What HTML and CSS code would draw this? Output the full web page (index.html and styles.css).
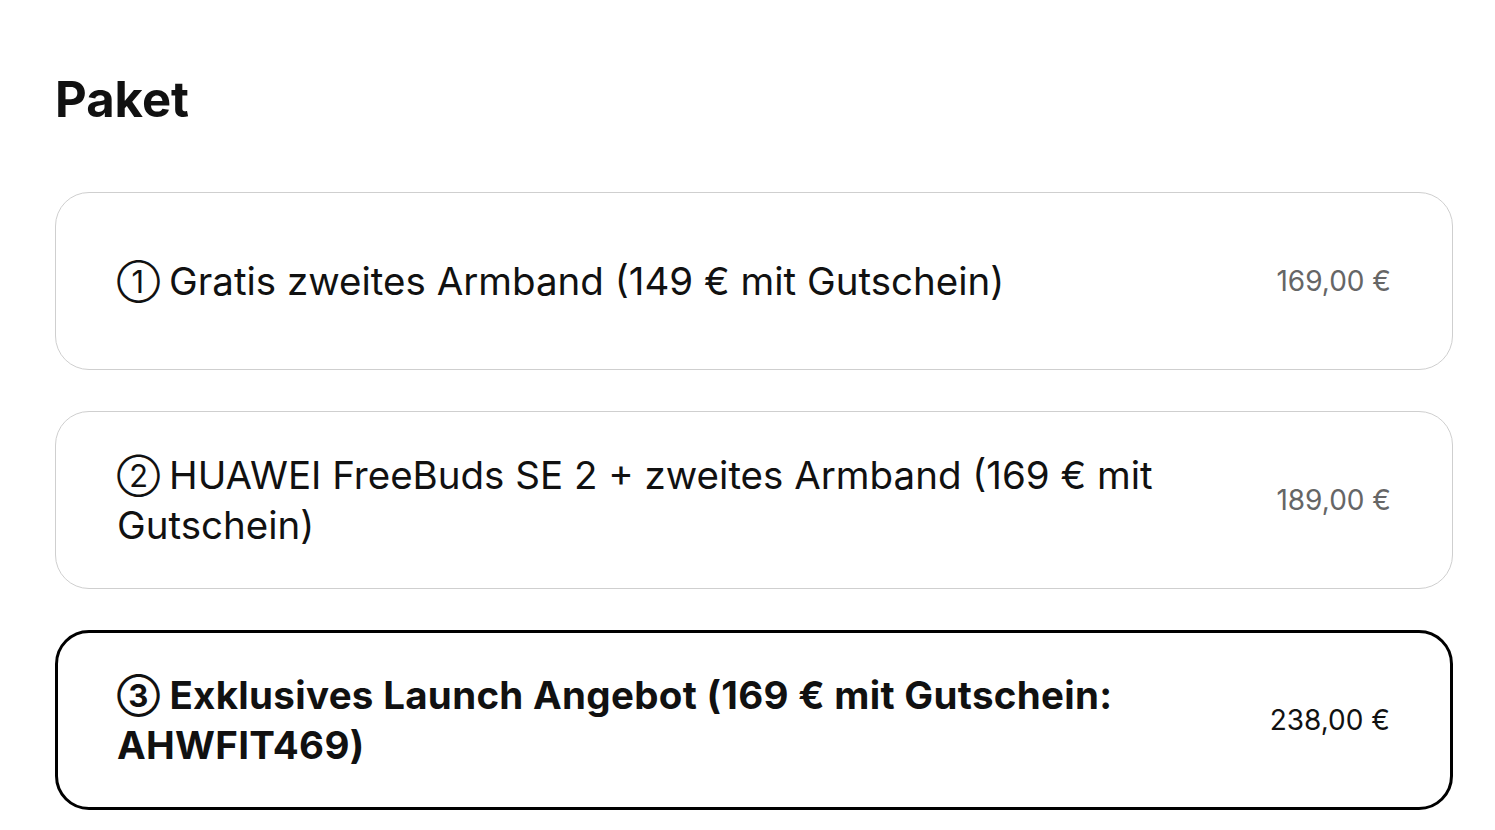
FILE: index.html
```html
<!DOCTYPE html>
<html lang="de">
<head>
    <meta charset="UTF-8">
    <meta name="viewport" content="width=device-width, initial-scale=1.0">
    <title>Paket</title>
    <link rel="stylesheet" href="styles.css">
</head>
<body>
    <section class="package">
        <h2 class="package-title">Paket</h2>

        <div class="option-list">
            <div class="option">
                <div class="option-name"><span class="num">①</span>Gratis zweites Armband (149 € mit Gutschein)</div>
                <div class="option-price">169,00 €</div>
            </div>
            <div class="option">
                <div class="option-name"><span class="num">②</span>HUAWEI FreeBuds SE 2 + zweites Armband (169 € mit Gutschein)</div>
                <div class="option-price">189,00 €</div>
            </div>
            <div class="option selected">
                <div class="option-name"><span class="num">③</span>Exklusives Launch Angebot (169 € mit Gutschein: AHWFIT469)</div>
                <div class="option-price">238,00 €</div>
            </div>
        </div>
    </section>
</body>
</html>
```

FILE: styles.css
```css
body {
    margin: 0;
    background: #fff;
    color: #111;
    font-family: Inter, "Open Sans", sans-serif;
}
.package {
    padding: 70px 42px 20px 55px;
}
.package-title {
    margin: 0 0 62px 0;
    font-size: 49px;
    font-weight: 700;
    line-height: 60px;
}
.option-list {
    display: flex;
    flex-direction: column;
    gap: 41px;
}
.option {
    display: flex;
    align-items: center;
    justify-content: space-between;
    gap: 40px;
    min-height: 100px;
    padding: 38px 61px;
    border: 1px solid #cfcfcf;
    border-radius: 34px;
}
.option-name {
    max-width: 1090px;
    font-size: 38.5px;
    line-height: 50px;
}
/* circled number in front of each package */
.num {
    margin-right: 9px;
    font-size: 31px;
    line-height: 1;
    vertical-align: 2px;
}
.option-price {
    flex-shrink: 0;
    font-size: 28px;
    color: #666;
}
.option.selected {
    border: 3px solid #000;
    padding: 37px 60px 37px 59px;
}
.option.selected .option-name {
    font-weight: 700;
    letter-spacing: 0.3px;
}
.option.selected .option-price {
    color: #111;
}
```
